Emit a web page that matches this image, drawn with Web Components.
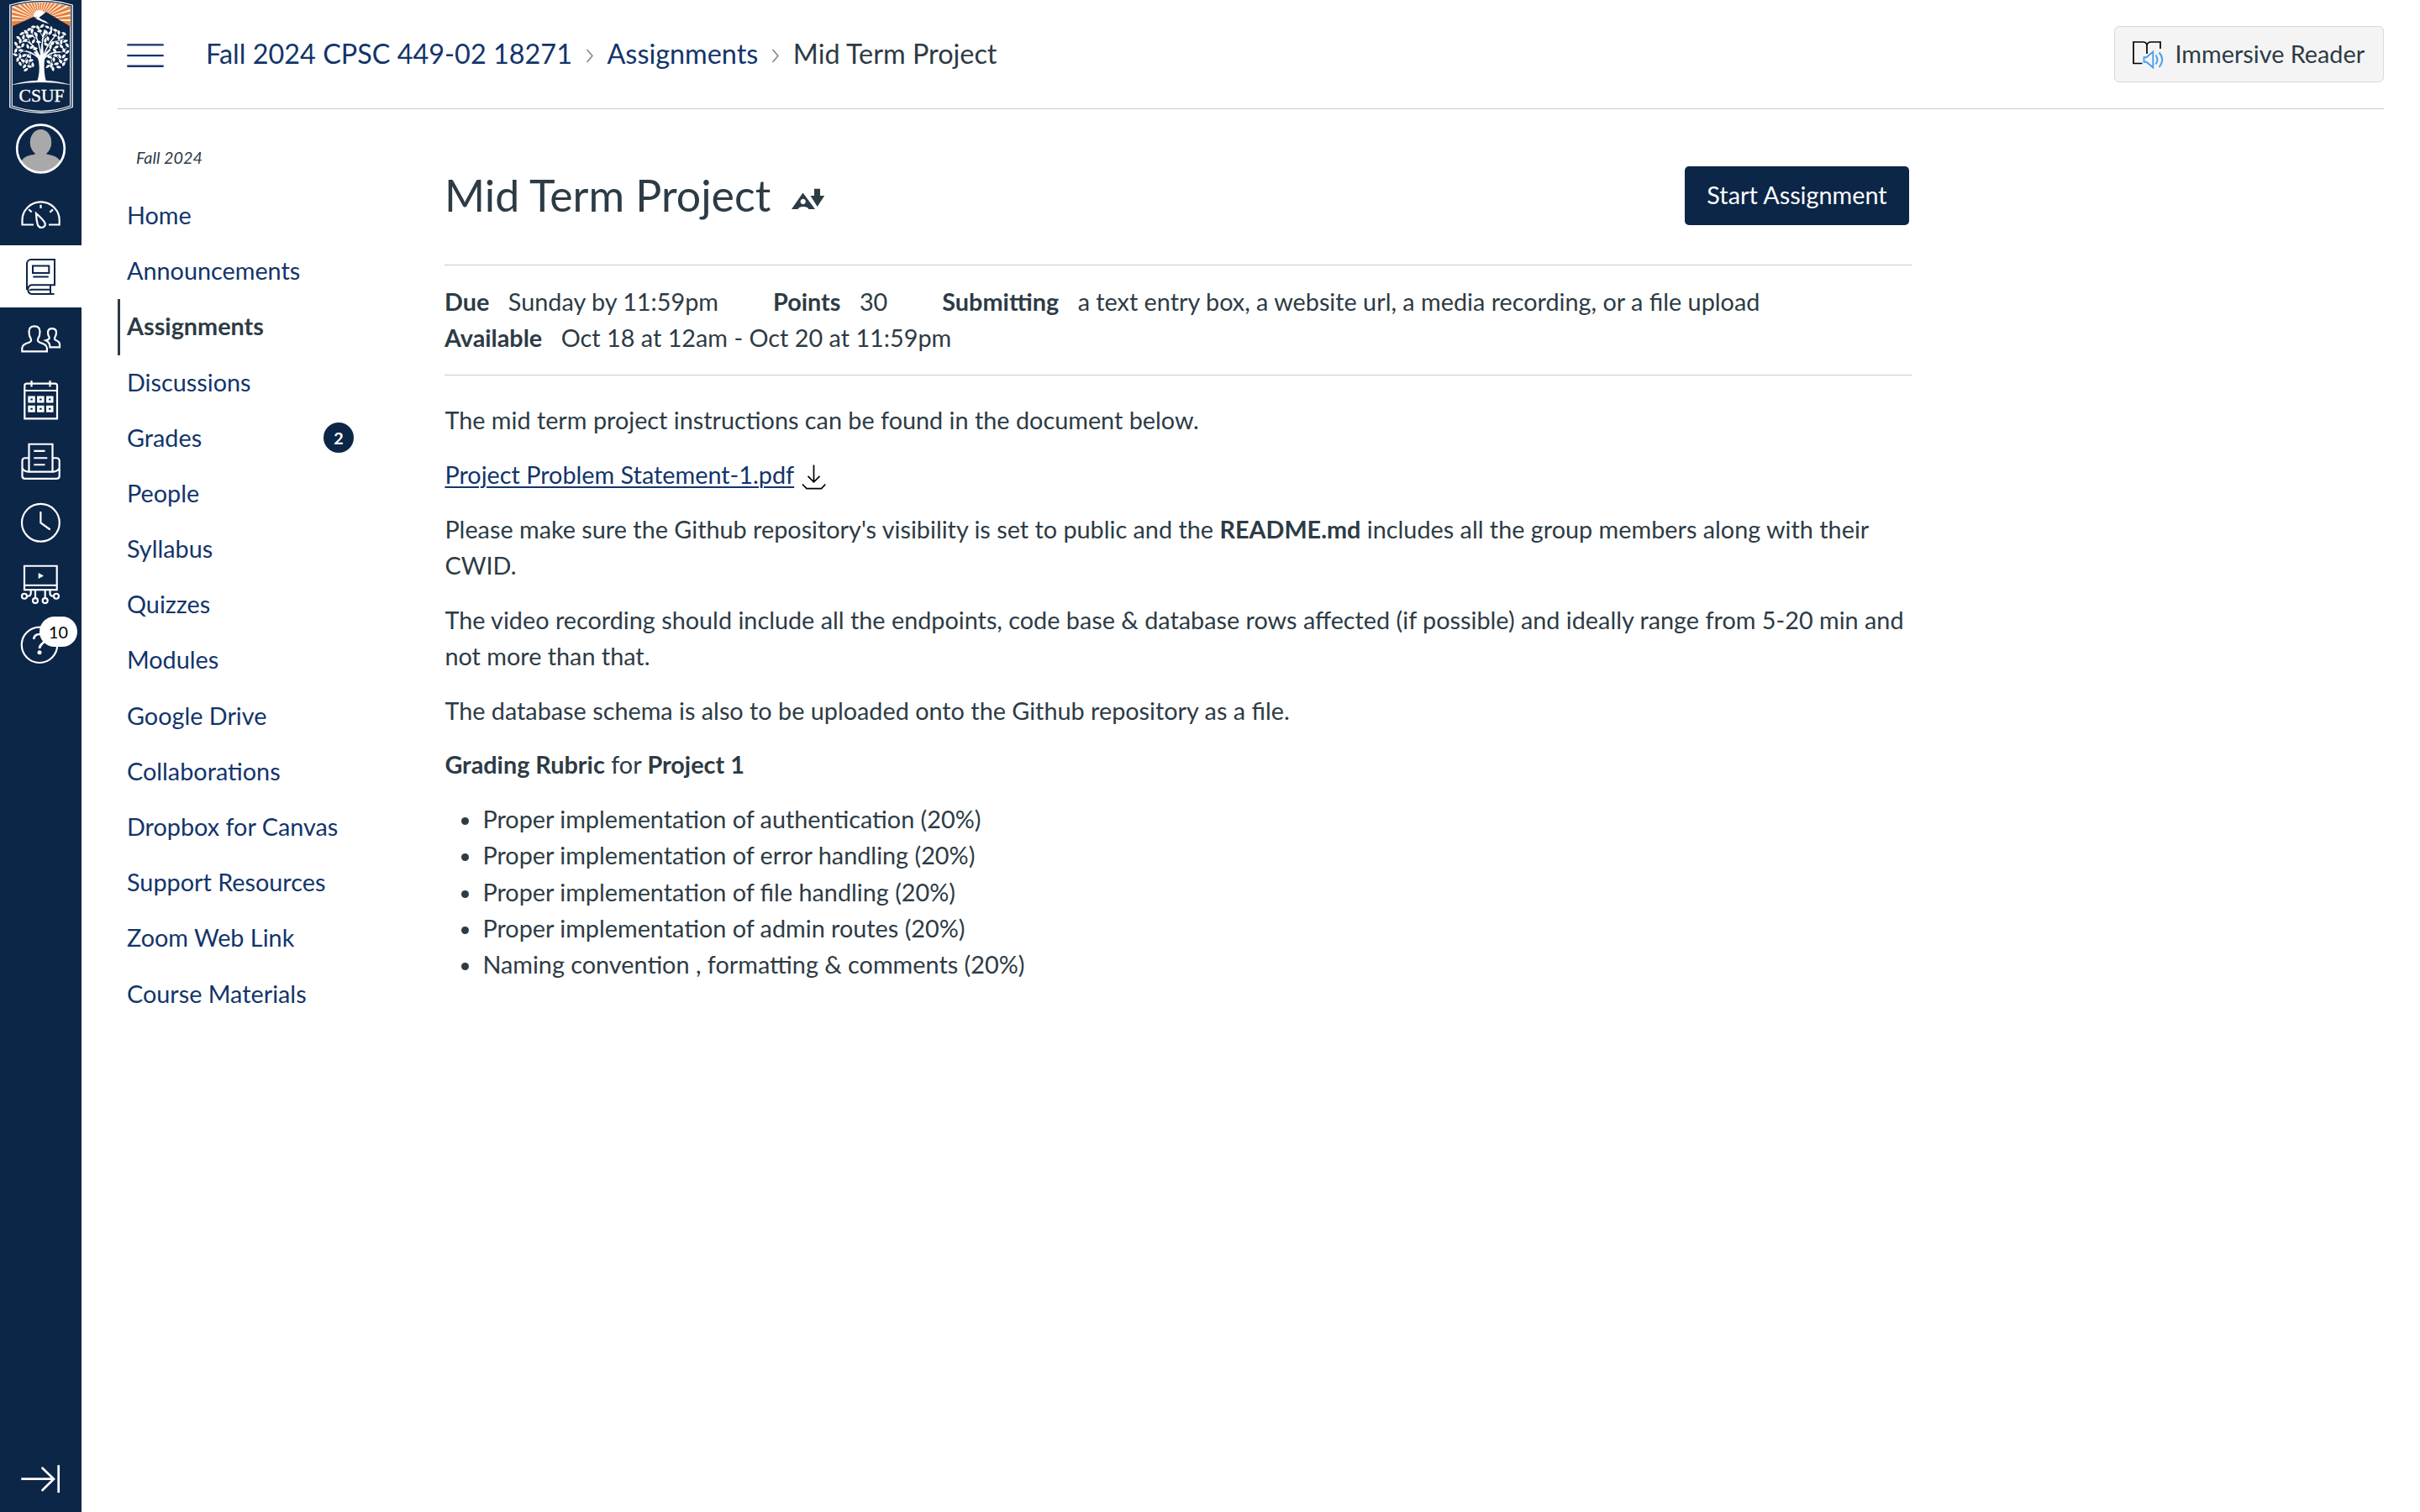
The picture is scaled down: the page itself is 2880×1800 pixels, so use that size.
<!DOCTYPE html>
<html lang="en">
<head>
<meta charset="utf-8">
<title>Mid Term Project</title>
<style>
  html, body { margin: 0; height: 100%; }
  body {
    --brand: #0c2648; --link: #12356b; --ink: #2d3b45; --rule: #c7cacc;
    font-family: Lato, "Noto Sans", sans-serif; font-size: 28.8px; line-height: 43.2px;
    color: var(--ink); background: #fff; overflow: hidden;
  }
</style>
</head>
<body>
<lms-shell>
  <global-rail slot="rail"></global-rail>
  <top-bar slot="top">
    <bread-crumbs>
      <a>Fall 2024 CPSC 449-02 18271</a><crumb-sep></crumb-sep><a>Assignments</a><crumb-sep></crumb-sep><span>Mid Term Project</span>
    </bread-crumbs>
    <reader-button slot="end">Immersive Reader</reader-button>
  </top-bar>
  <course-nav slot="nav" term="Fall 2024">
    <nav-link>Home</nav-link>
    <nav-link>Announcements</nav-link>
    <nav-link active>Assignments</nav-link>
    <nav-link>Discussions</nav-link>
    <nav-link count="2">Grades</nav-link>
    <nav-link>People</nav-link>
    <nav-link>Syllabus</nav-link>
    <nav-link>Quizzes</nav-link>
    <nav-link>Modules</nav-link>
    <nav-link>Google Drive</nav-link>
    <nav-link>Collaborations</nav-link>
    <nav-link>Dropbox for Canvas</nav-link>
    <nav-link>Support Resources</nav-link>
    <nav-link>Zoom Web Link</nav-link>
    <nav-link>Course Materials</nav-link>
  </course-nav>
  <assignment-view>
    <span slot="title">Mid Term Project</span>
    <meta-field slot="meta" label="Due">Sunday by 11:59pm</meta-field>
    <meta-field slot="meta" label="Points">30</meta-field>
    <meta-field slot="meta" label="Submitting">a text entry box, a website url, a media recording, or a file upload</meta-field>
    <meta-field slot="meta" label="Available">Oct 18 at 12am - Oct 20 at 11:59pm</meta-field>
    <rich-text></rich-text>
  </assignment-view>
</lms-shell>

<script>
const define = (name, html, setup) => {
  const tpl = document.createElement('template');
  tpl.innerHTML = html;
  customElements.define(name, class extends HTMLElement {
    constructor() {
      super();
      this.attachShadow({ mode: 'open' }).append(tpl.content.cloneNode(true));
      if (setup) setup.call(this, this.shadowRoot);
    }
  });
};

define('lms-shell', `
<style>
  :host { display: flex; height: 100vh; }
  .page { flex: 1; min-width: 0; padding: 0 43px; display: flex; flex-direction: column; }
  .cols { display: flex; flex: 1; }
</style>
<slot name="rail"></slot>
<div class="page"><slot name="top"></slot><div class="cols"><slot name="nav"></slot><slot></slot></div></div>`);

/* University crest: frame, sunburst over mountains, oak tree */
define('campus-logo', `
<style>
  :host { display: block; height: 137px; }
  svg { display: block; }
  text { font: 22px "Liberation Serif", serif; fill: #fff; stroke: #fff; stroke-width: .35; }
</style>
<svg width="97" height="137" viewBox="0 0 97 137">
  <defs><clipPath id="sky"><path d="M14.3 8Q49 -2 83.7 8V31.5L55 14.3 46 21 40 20 14.3 31.5z"/></clipPath></defs>
  <path d="M11.8 6Q49 -5.5 86.2 6V127.5Q49 141 11.8 127.5z" fill="none" stroke="#fff" stroke-width="1.3"/>
  <path d="M14.3 8Q49 -2.5 83.7 8V126Q49 138.5 14.3 126z" fill="none" stroke="#fff" stroke-width="1.1"/>
  <g clip-path="url(#sky)"><rect x="14" width="70" height="34" fill="#e9813b"/><g id="rays" fill="#fff"></g><circle cx="47" cy="19" r="7" fill="#fff"/></g>
  <path d="M40 20L43 21.500 46 20.500 50 23.500 54 25 58.500 28.500 52 26.500 47.500 24.500 44 23z" fill="#fff"/>
  <g id="tree" fill="none" stroke="#fff" stroke-linecap="round">
    <path d="M44 97.500Q48 86 46.200 74Q45 67 40 62L42 61Q47 64 48 66L49.500 52H51L52 66Q54 62 59 58L60.500 60Q53 66 52.700 74Q52 87 55 97.500z" fill="#fff" stroke="none"/>
    <path stroke-width="1.500" d="M47 70Q40 63 31 61M47 68Q42 55 34 50M49 66Q46 48 41 39M50 62Q50 45 53 36M52 66Q57 52 64 45M52 70Q60 61 71 62"/>
    <path stroke-width=".8" d="M31 61Q25 60 22 65M36 62Q31 70 27 76M34 50Q28 48 24 51M37 53Q32 44 33 38M44 46Q37 42 29 39M50 47Q56 42 62 35M51 44Q46 37 47 32M60 50Q69 49 76 47M64 45Q67 40 66 37M71 62Q77 63 79 57M64 62Q69 71 74 73M61 63Q60 72 63 78M36 62Q38 71 34 77M41 46Q37 38 38 34"/>
  </g>
  <g id="leaves" fill="#fff"></g>
  <path d="M15 100.700Q49 91 83 100.700Q49 95 15 100.700z" fill="#fff" stroke="#fff" stroke-width=".3"/>
  <text x="22.500" y="120.700" textLength="54" lengthAdjust="spacingAndGlyphs">CSUF</text>
</svg>`, function (root) {
  let rays = '';
  for (let i = 0; i <= 20; i++) {
    const a = Math.PI * (1 + i / 20), w = 0.026;
    const p = (t) => (47 + 48 * Math.cos(t)).toFixed(1) + ' ' + (24 + 48 * Math.sin(t)).toFixed(1);
    rays += `<path d="M47 24L${p(a - w)} ${p(a + w)}z"/>`;
  }
  root.getElementById('rays').innerHTML = rays;
  const spots = [[40,32],[45,33],[50,31],[56,32],[61,34],[35,35],[31,38],[38,37],[47,37],[55,38],[60,39],[66,36],[70,39],[26,40],[33,43],[28,44],[37,43],[43,41],[52,41],[65,42],[70,45],[74,44],[22,45],[24,49],[30,48],[19,52],[40,49],[46,50],[57,46],[62,52],[68,51],[73,50],[78,49],[80,54],[27,54],[22,56],[33,55],[38,56],[55,53],[60,56],[67,56],[73,55],[19,60],[25,60],[76,60],[80,62],[18,65],[24,67],[29,66],[34,67],[21,71],[66,66],[71,67],[76,67],[59,68],[64,71],[78,71],[27,72],[32,73],[37,72],[24,76],[29,79],[35,79],[39,77],[31,83],[58,74],[61,78],[67,76],[72,73],[76,76],[70,80],[63,82],[57,79],[76,40],[54,48],[42,58],[65,60]];
  root.getElementById('leaves').innerHTML = spots.map(([x, y], i) =>
    `<path d="M-3.200 0Q-.8 -3.400 3.200 0Q-.8 3.200 -3.200 0z" transform="translate(${x} ${y}) rotate(${(i * 67) % 360})"/>`).join('');
});

define('rail-item', `
<style>
  :host { display: block; height: 73.25px; color: #fff; position: relative; }
  :host([active]) { background: #fff; color: var(--brand); }
  .badge { position: absolute; left: 47px; top: 2px; width: 45px; height: 36px; border-radius: 18px; background: #fff;
    color: #000; font-size: 19.8px; line-height: 37px; text-align: center; }
</style><slot></slot>`, function (root) {
  const n = this.getAttribute('count');
  if (n) { const b = document.createElement('span'); b.className = 'badge'; b.textContent = n; root.append(b); }
});

define('global-rail', `
<style>
  :host { display: flex; flex-direction: column; width: 97px; flex: none; background: var(--brand); }
  .avatar { height: 82px; }
  svg { display: block; width: 97px; height: 100%; fill: none; stroke: currentColor; stroke-width: 2.2; }
  .end { margin-top: auto; height: 78px; color: #fff; }
</style>
<campus-logo></campus-logo>
<div class="avatar"><svg viewBox="0 137 97 82">
  <defs><clipPath id="c"><circle cx="48.5" cy="177" r="28"/></clipPath></defs>
  <g clip-path="url(#c)" fill="#a9a9a9" stroke="none"><ellipse cx="48.5" cy="169.5" rx="12.7" ry="15.5"/><path d="M43 178H54V182.500Q56 184 60 184.500Q71 186.500 74 196V208H23V196Q26 186.500 37 184.500Q42 184 43 182z"/></g>
  <circle cx="48.500" cy="177" r="28.300" stroke="#fff" stroke-width="2.700"/></svg></div>
<rail-item><svg viewBox="0 219 97 73.25"><path d="M40 267.500H26.500V262A22 21.500 0 0 1 70.700 262V267.500H58M48.500 243.800V248M34.200 249.200L37.700 252.500M62.900 249.400L59.400 252.700M43 254Q43.200 262 44.800 267.500Q46.500 271.300 50 271Q54.800 269.500 53.500 265.500Q51.500 261.500 43 254z"/></svg></rail-item>
<rail-item active><svg viewBox="0 292 97 73.25"><path stroke-width="2" d="M37 309H65V339.300H37.500A5.500 5.500 0 0 0 37.500 350H64.500M37 309A5 5 0 0 0 32 314V345M60 339.300V350M60 344.700H37A2 2 0 0 0 35.500 346"/><path stroke-width="2" d="M39 316.500H58.300V325H39zM39.300 329.400H57.700"/></svg></rail-item>
<rail-item><svg viewBox="0 365.25 97 73.25"><path d="M26.300 417.600V413.500C26.300 410 30 408.500 35 406.800C37.500 405.500 37.500 403.500 36.500 402C34.700 399.500 34.500 397 34.500 394C34.500 390 37 387.600 41 387.600S47.500 390 47.500 394C47.500 397 47.300 399.500 45.500 402C44.500 403.500 44.500 405.500 47 406.800C52 408.500 55.900 410 55.900 413.500V417.600zM59.500 412.600H71V409C71 406.500 69 405.300 66.500 404.300C64.500 403.300 64.700 401.800 65.500 400.500C66.700 398.500 67 397 67 395.200C67 392.300 65 390.400 62 390.400S57 392.300 57 395.200C57 397 57.300 398.500 58.500 400.500C59.300 402 58.500 403.500 54.500 404.500C58 406 59.500 408 59.500 412.600z"/></svg></rail-item>
<rail-item><svg viewBox="0 438.5 97 73.25"><path d="M32 456.200H65.500Q68 456.200 68 458.700V497.800H29.300V458.700Q29.300 456.200 32 456.200M29.300 464.500H68M37.500 452.500V460M59.500 452.500V460"/><path stroke-width="3" d="M34.800 472.500h5.500v5h-5.500zM45.600 472.500h5.500v5h-5.500zM56.500 472.500h5.500v5h-5.500zM34.800 483.700h5.500v5h-5.500zM45.600 483.700h5.500v5h-5.500zM56.500 483.700h5.500v5h-5.500z"/></svg></rail-item>
<rail-item><svg viewBox="0 511.75 97 73.25"><path d="M34.500 561V528.500H62.500V561M40.300 536.700H53.500M40.300 545H56.300M40.300 553H53.500M34.500 545H30Q26.500 545 26.500 548.500V566.500Q26.500 569.700 30 569.700H67Q70.700 569.700 70.700 566.500V548.500Q70.700 545 67 545H62.500M26.500 557Q29 561.300 33.500 561.300H63.500Q68 561.300 70.700 557"/></svg></rail-item>
<rail-item><svg viewBox="0 585 97 73.25"><circle cx="48.400" cy="622.300" r="22.400"/><path d="M48.400 609V622.500L59.700 630.500"/></svg></rail-item>
<rail-item><svg viewBox="0 658.25 97 73.25"><path d="M29 673H67.700V701.300H29zM29 696H67.700M36.700 701V705.500Q36.700 709 32.500 709M42 701V711M53.700 701V711M59.500 701V705.500Q59.500 709 63.500 709"/><circle cx="29" cy="709" r="3"/><circle cx="42" cy="714.300" r="3"/><circle cx="53.700" cy="714.300" r="3"/><circle cx="67" cy="709" r="3"/><path fill="#fff" stroke="none" d="M45.700 681.300V688.200L52 684.800z"/></svg></rail-item>
<rail-item count="10"><svg viewBox="0 731.5 97 73.25"><circle cx="47" cy="767.300" r="21.200"/><path stroke-width="2.600" d="M40.200 760.500C40.500 756.500 43 754.500 47 754.500S54 757 54 760.500C54 765 47 765.500 47 771.500"/><circle cx="47" cy="776.300" r="2.500" fill="#fff" stroke="none"/></svg></rail-item>
<div class="end"><svg viewBox="0 1722 97 78"><path stroke-width="2.700" stroke-linecap="round" d="M50.500 1747.800L64 1760.700L50.500 1774"/><path stroke-width="2.700" d="M25.300 1760.700H64M69.700 1744.300V1777"/></svg></div>`);

define('top-bar', `
<style>
  :host { display: flex; align-items: center; height: 129px; border-bottom: 1px solid var(--rule); box-sizing: content-box; }
  .menu { margin: 3px 51px 0 11px; width: 44px; height: 29px; display: block; flex: none; }
  .crumbs { flex: 1; margin: 0 0 1px -1px; }
</style>
<svg class="menu" viewBox="0 0 44 29" stroke="#12356b" stroke-width="2.400"><path d="M.3 1.400H43.700M.3 14.100H43.700M.3 26.800H43.700"/></svg>
<div class="crumbs"><slot></slot></div><slot name="end"></slot>`);

define('bread-crumbs', `
<style>
  :host { display: flex; align-items: center; font-size: 32.4px; white-space: nowrap; }
  ::slotted(a) { color: var(--link); }
</style><slot></slot>`);

define('crumb-sep', `
<style>:host { display: block; margin: 5px 15.500px 0 16px; } svg { display: block; }</style>
<svg width="10" height="17" viewBox="0 0 10 17" fill="none" stroke="#7a848b" stroke-width="1.500"><path d="M1.500 1L8 8.500L1.500 16"/></svg>`);

define('reader-button', `
<style>
  :host { display: flex; align-items: center; box-sizing: border-box; height: 67px; width: 321px; padding-left: 20px; gap: 13.500px;
    border: 1px solid #d9d9d9; border-radius: 6px; background: #f4f4f4; white-space: nowrap; }
</style>
<svg width="38" height="36" viewBox="2537 46 38 36" fill="none" stroke-width="1.700"><path stroke="#000" d="M2549.500 74.500H2539V49H2550Q2554.700 49 2555 53Q2555.500 49 2560 49H2571V57M2555 52V63"/><path stroke="#4a9eea" stroke-width="1.900" d="M2551.500 67.300V72.800H2554.500L2562.300 79.500V60.500L2554.500 67.300zM2565.500 64.500Q2569.500 70 2565.500 75.500M2569.500 61.500Q2577 70 2569.500 79"/></svg>
<span><slot></slot></span>`);

define('course-nav', `
<style>
  :host { display: block; width: 389px; flex: none; }
  .term { font-size: 19.8px; font-style: italic; line-height: 24px; padding: 45px 0 0 22px; margin-bottom: 25px; }
</style>
<div class="term"></div><slot></slot>`, function (root) {
  root.querySelector('.term').textContent = this.getAttribute('term');
});

define('nav-link', `
<style>
  :host { display: flex; align-items: center; box-sizing: border-box; height: 66.2px; padding: 0 0 1px 11px; width: 281px; color: var(--link); white-space: nowrap; }
  :host([active]) { color: var(--ink); font-weight: 700; border-left: 3px solid var(--ink); padding-left: 8px; }
  b { margin-left: auto; width: 36px; height: 36px; border-radius: 50%; background: var(--brand); color: #fff; font-size: 19.8px; line-height: 36px; text-align: center; }
</style><span><slot></slot></span>`, function (root) {
  const n = this.getAttribute('count');
  if (n) { const b = document.createElement('b'); b.textContent = n; root.append(b); }
});

define('meta-field', `
<style>
  :host { display: block; white-space: nowrap; }
  b { margin-right: 22.500px; }
</style><b></b><slot></slot>`, function (root) {
  root.querySelector('b').textContent = this.getAttribute('label');
});

define('assignment-view', `
<style>
  :host { display: block; width: 1746px; flex: none; }
  header { display: flex; align-items: center; padding: 68px 3px 47px 0; }
  h1 { font-size: 51.84px; line-height: 70px; font-weight: 400; margin: -2px 25px 0 0; }
  .a11y { display: block; margin-top: 7px; }
  button { margin-left: auto; width: 267px; height: 70px; border: 0; border-radius: 5px; background: var(--brand); color: #fff; font: inherit; padding: 0; }
  .meta { display: flex; flex-wrap: wrap; column-gap: 65px; border: solid var(--rule); border-width: 1px 0; padding: 22px 0 21.600px; }
</style>
<header><h1><slot name="title"></slot></h1>
<svg class="a11y" width="40" height="26" viewBox="942 224 40 26" fill="#2d3b45"><path fill-rule="evenodd" d="M955.500 229.500L970 249H962.500Q961 246 956 246T949.500 249H942zM955.700 236.800a3.200 3.200 0 1 0 .01 0z"/><path d="M969 224.700H976V233H981.200L972.700 246L964.500 233H969z"/></svg>
<button>Start Assignment</button></header>
<div class="meta"><slot name="meta"></slot></div>
<slot></slot>`);

define('file-link', `
<style>
  :host { display: inline; }
  a { color: var(--link); text-decoration: underline; text-decoration-thickness: 2px; text-underline-offset: 3px; }
  svg { vertical-align: -8px; margin-left: 9px; }
</style><a><slot></slot></a><svg width="30" height="31" viewBox="0 0 30 31" fill="none" stroke="#000" stroke-width="1.700"><path d="M14.500 .5V21M7.500 13.800L14.500 20.800L21.500 13.800M1 23.500L6 28.700H23.500L28.300 23.500"/></svg>`);

define('rich-text', `
<style>
  :host { display: block; padding: 32px 0 0 .4px; }
  p { margin: 0 0 21.600px; }
  ul { margin: 0 0 0 45px; padding: 0; }
</style>
<p>The mid term project instructions can be found in the document below.</p>
<p><file-link>Project Problem Statement-1.pdf</file-link></p>
<p>Please make sure the Github repository's visibility is set to public and the <strong>README.md</strong> includes all the group members along with their CWID.</p>
<p>The video recording should include all the endpoints, code base &amp; database rows affected (if possible) and ideally range from 5-20 min and not more than that.</p>
<p>The database schema is also to be uploaded onto the Github repository as a file.</p>
<p><strong>Grading Rubric</strong> for <strong>Project 1</strong></p>
<ul>
  <li>Proper implementation of authentication (20%)</li>
  <li>Proper implementation of error handling (20%)</li>
  <li>Proper implementation of file handling (20%)</li>
  <li>Proper implementation of admin routes (20%)</li>
  <li>Naming convention , formatting &amp; comments (20%)</li>
</ul>`);
</script>
</body>
</html>
